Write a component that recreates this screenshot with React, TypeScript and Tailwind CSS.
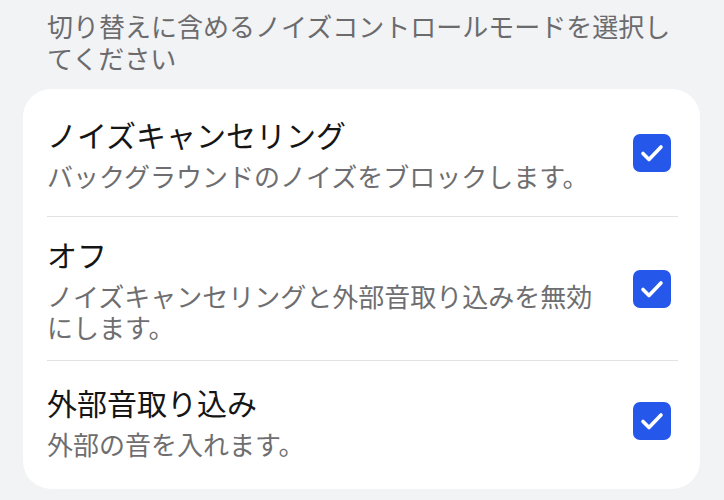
import React from 'react';

const modes = [
  { title: 'ノイズキャンセリング', desc: 'バックグラウンドのノイズをブロックします。' },
  { title: 'オフ', desc: 'ノイズキャンセリングと外部音取り込みを無効にします。' },
  { title: '外部音取り込み', desc: '外部の音を入れます。' },
];

function CheckBox() {
  return (
    <div className="w-[38px] h-[38px] shrink-0 rounded-[7px] bg-[#2457ea] flex items-center justify-center">
      <svg width="38" height="38" viewBox="0 0 38 38" fill="none">
        <path d="M10 19.5 L16 25.5 L28 13" stroke="white" strokeWidth="3.6" strokeLinecap="round" strokeLinejoin="round" />
      </svg>
    </div>
  );
}

export default function App() {
  return (
    <div
      className="w-[724px] h-[500px] bg-[#f2f3f5] overflow-hidden"
      style={{ fontFamily: '"Noto Sans CJK JP", "Noto Sans", sans-serif' }}
    >
      <p className="px-[47px] pt-[10px] text-[26px] leading-[32px] text-[#6b6b6e]">
        切り替えに含めるノイズコントロールモードを選択してください
      </p>

      <div className="mt-[15px] ml-[23px] mr-[24px] bg-white rounded-[28px] pl-[24px] pr-[22px]">
        {modes.map((m, i) => {
          const last = i === modes.length - 1;
          return (
            <div
              key={m.title}
              className={`flex items-center gap-[30px] min-h-[128px] pt-[18px] ${last ? 'pb-[26px]' : 'pb-[18px] border-b border-[#e2e2e4]'}`}
            >
              <div className="flex-1">
                <div className="text-[30px] leading-[38px] text-[#151515]">{m.title}</div>
                <div className="mt-[7px] text-[26px] leading-[31px] text-[#6e6e70]">{m.desc}</div>
              </div>
              <div className="mr-[7px]">
                <CheckBox />
              </div>
            </div>
          );
        })}
      </div>
    </div>
  );
}
